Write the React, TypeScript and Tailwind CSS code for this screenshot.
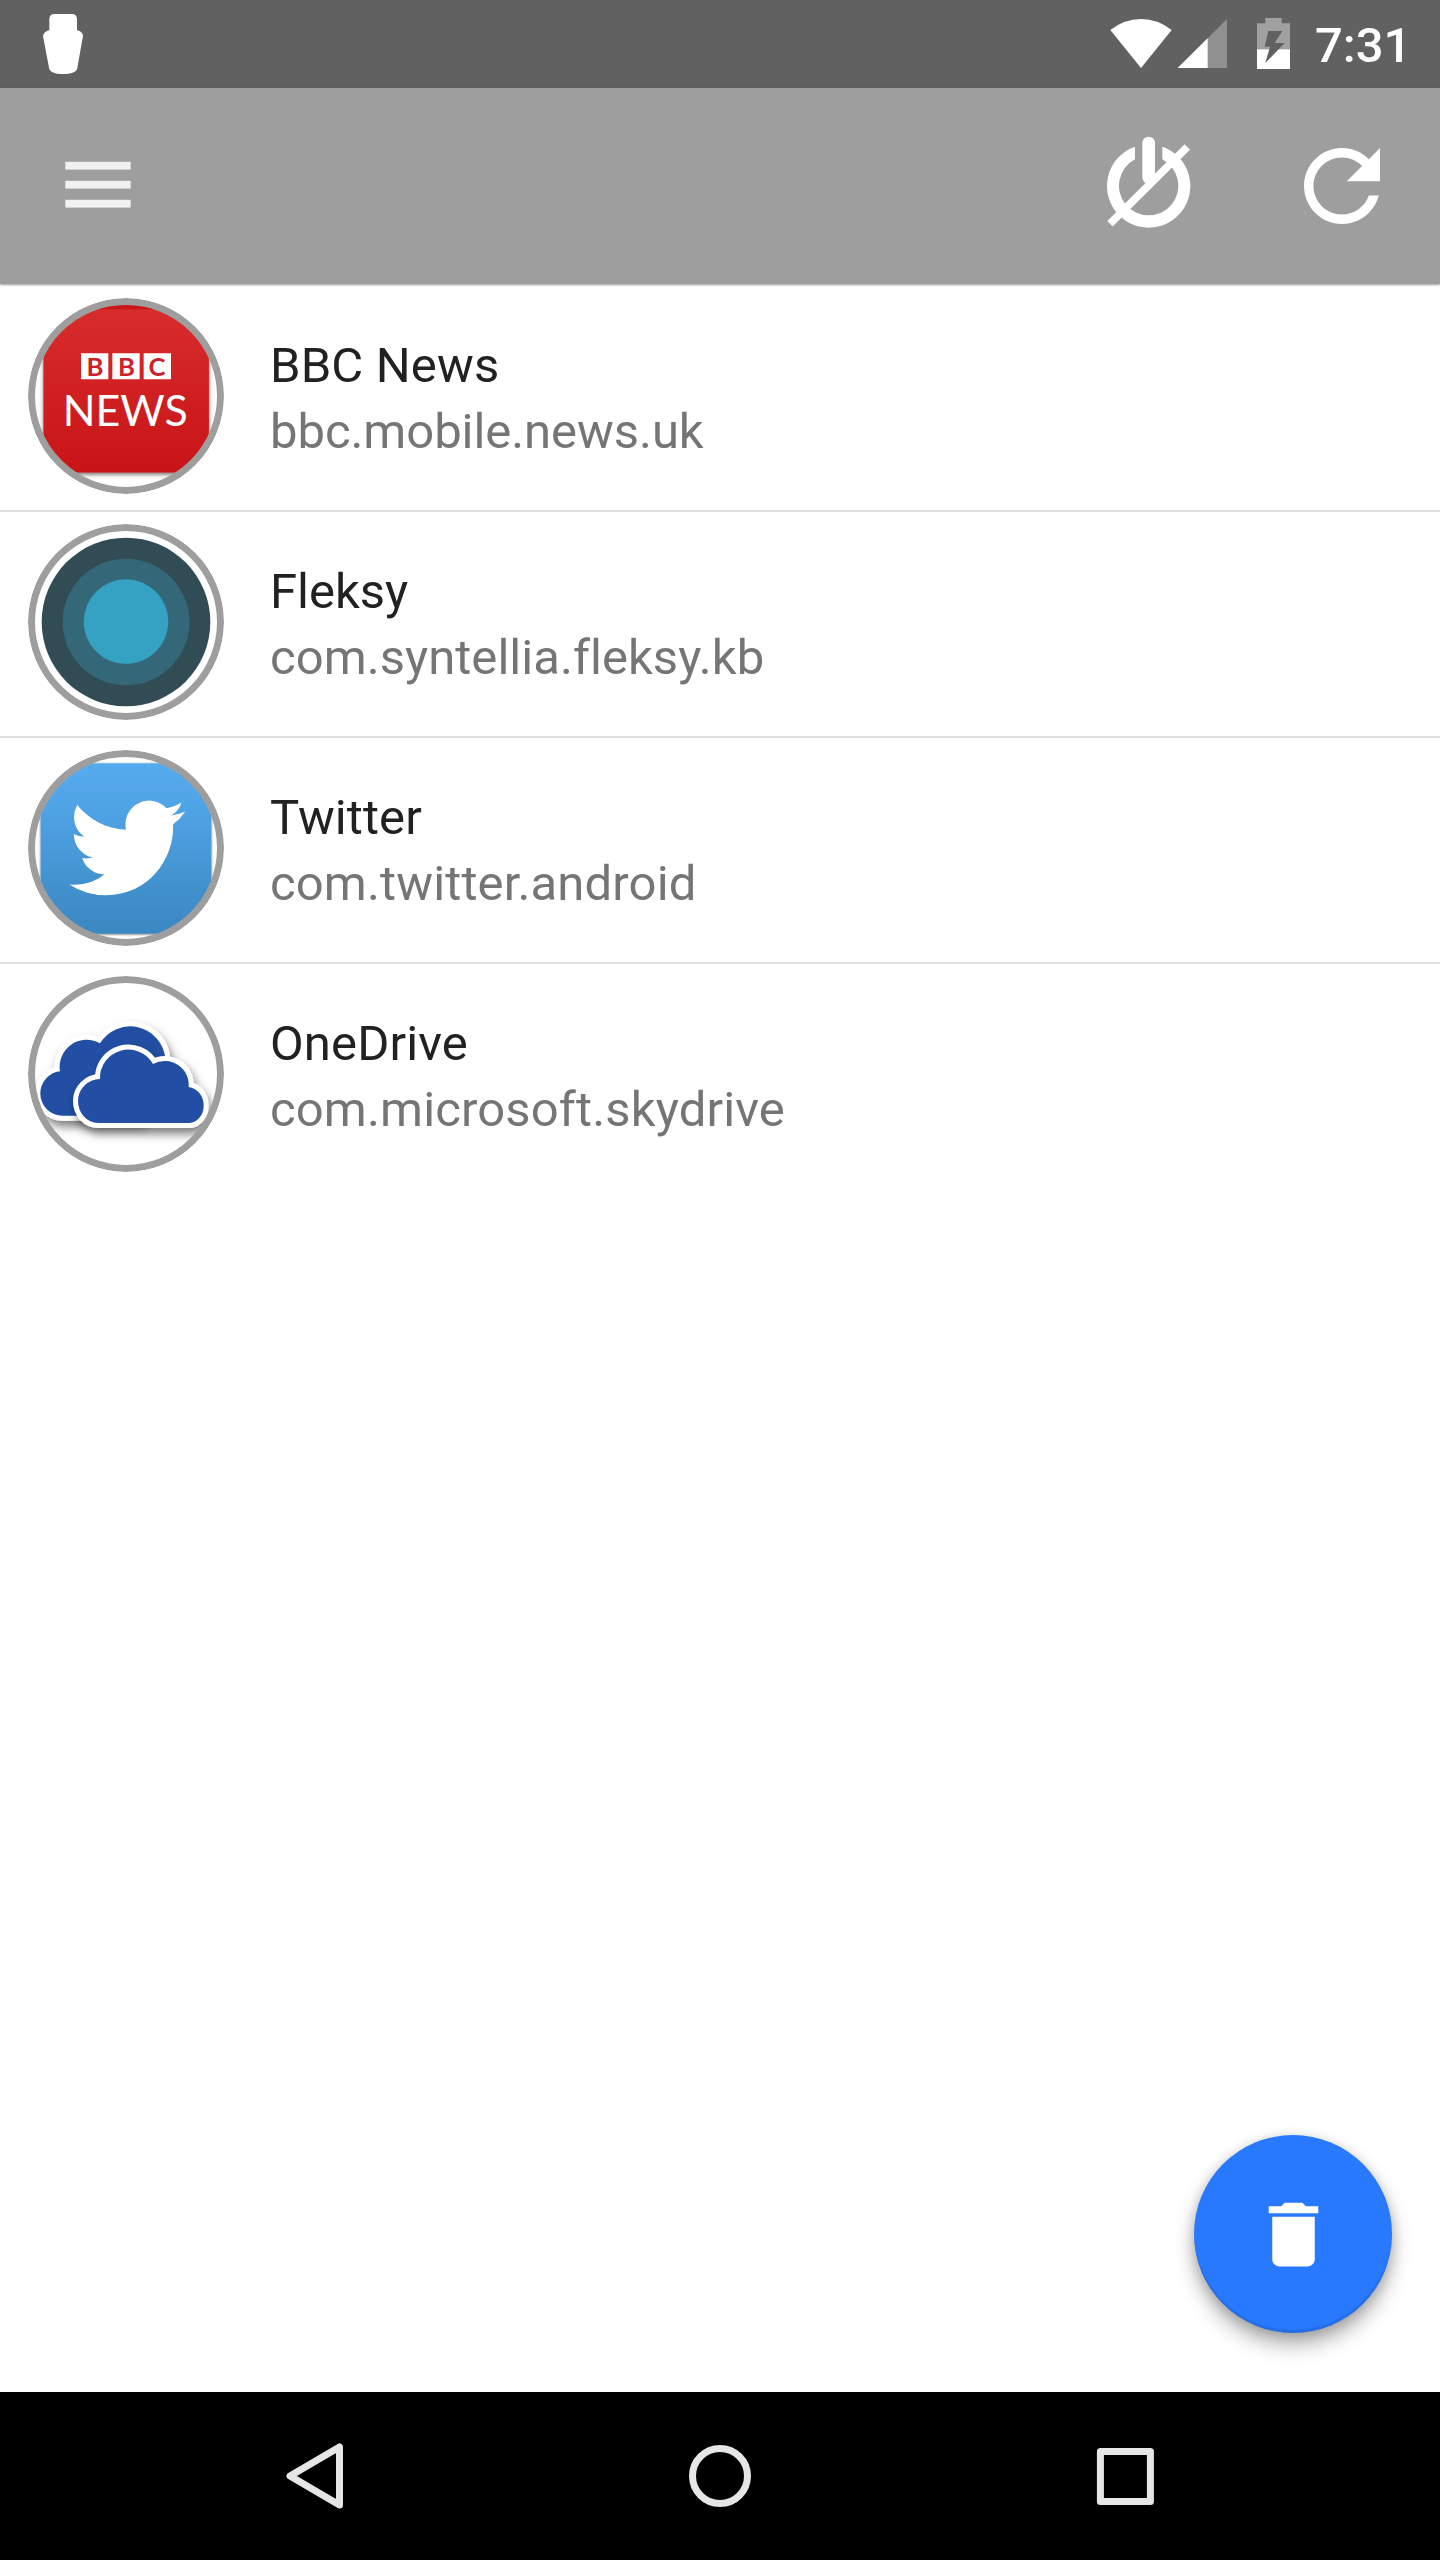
import type { ReactNode } from "react";

function StatusBar() {
  return (
    <header className="flex h-[88px] items-start bg-[#616161]">
      <svg className="ml-[43px] mt-[14px] h-[60px] w-[40px]" viewBox="129 42 120 180" fill="#fff">
        <path d="M148 58Q148 42 164 42H215Q231 42 231 58V90C241 93 249 99 249 108L232 203C232 216 212 222 189 222S148 216 147 203L129 108C130 99 138 93 148 90Z" />
      </svg>
      <svg className="ml-auto mt-[18px] h-[51px] w-[180px]" viewBox="90 54 540 153">
        <path d="M91 90Q133 57 183 57T275 90L183 204Z" fill="#fff" />
        <path d="M293 204L441 57V204Z" fill="#909090" />
        <path d="M293 204L383 115V204Z" fill="#fff" />
        <path d="M531 70H556V54H605V70H630V148H531Z" fill="#a0a0a0" />
        <path d="M531 148H630V207H531Z" fill="#fff" />
        <path d="M565 93H607L584 129H614L556 189L570 140H554Z" fill="#616161" />
      </svg>
      <span className="ml-[25px] mr-[32px] mt-[17px] w-[93px] whitespace-nowrap font-['Roboto',sans-serif] text-[49px] font-medium leading-[58px] text-white">
        7:31
      </span>
    </header>
  );
}

function AppBar() {
  return (
    <div className="relative z-10 flex h-[196px] items-start bg-[#9e9e9e] shadow-[0_1px_2px_rgba(0,0,0,0.4)]">
      <svg className="ml-[65px] mt-[73px] h-[48px] w-[66px]" viewBox="0 0 66 48" fill="#f1f1f1">
        <rect x=".3" y=".8" width="65.4" height="7.8" />
        <rect x=".3" y="19.8" width="65.4" height="7.8" />
        <rect x=".3" y="38.8" width="65.4" height="7.8" />
      </svg>
      <svg className="ml-auto mt-[46px] h-[96px] w-[90px]" viewBox="72 402 270 288">
        <path d="M165 440V478A89 89 0 1 0 247 478V440A125 125 0 1 1 165 440Z" fill="#fff" />
        <path d="M187 429a19 19 0 0 1 38 0V525L200 550Q187 546 187 532Z" fill="#fff" />
        <path d="M90 671L322 441" stroke="#fff" strokeWidth="23" />
      </svg>
      <svg className="ml-[91px] mr-[41px] mt-[41px] size-[114px]" viewBox="0 0 24 24" fill="#fff">
        <path d="M17.65 6.35C16.2 4.9 14.21 4 12 4c-4.42 0-7.99 3.58-7.99 8s3.57 8 7.99 8c3.73 0 6.84-2.55 7.73-6h-2.08c-.82 2.33-3.04 4-5.65 4-3.31 0-6-2.69-6-6s2.69-6 6-6c1.66 0 3.14.69 4.22 1.78L13 11h7V4l-2.35 2.35z" />
      </svg>
    </div>
  );
}

function BbcIcon() {
  return (
    <g>
      <defs>
        <linearGradient id="bbc" x1="0" y1="0" x2="0" y2="1">
          <stop offset="0" stopColor="#d82c2c" />
          <stop offset="1" stopColor="#c91417" />
        </linearGradient>
        <filter id="bbcShadow" x="-10%" y="-10%" width="120%" height="120%">
          <feDropShadow dx="0" dy="6" stdDeviation="7" floodOpacity=".6" />
        </filter>
      </defs>
      <rect x="47" y="-14" width="495" height="537" fill="#c91417" filter="url(#bbcShadow)" />
      <rect x="47" y="34" width="495" height="489" fill="url(#bbc)" />
      <path d="M159 166h82v78h-82zM253 166h82v78h-82zM347 166h82v78h-82z" fill="#fff" />
      <g fontFamily="Lato, sans-serif">
        <g fontSize="77" fontWeight="700" fill="#cf2025" textAnchor="middle">
          <text x="201" y="233">B</text>
          <text x="295" y="233">B</text>
          <text x="387" y="233">C</text>
        </g>
        <text x="104" y="383" fontSize="128" fontWeight="400" fill="#fff" textLength="375" lengthAdjust="spacingAndGlyphs">
          NEWS
        </text>
      </g>
    </g>
  );
}

function FleksyIcon() {
  return (
    <g>
      <circle cx="294" cy="294" r="253" fill="#324c55" />
      <circle cx="294" cy="294" r="190" fill="#346879" />
      <circle cx="294" cy="293" r="127" fill="#35a1c3" />
    </g>
  );
}

function TwitterIcon() {
  return (
    <g>
      <defs>
        <linearGradient id="tw" x1="0" y1="0" x2="0" y2="1">
          <stop offset="0" stopColor="#55abee" />
          <stop offset=".25" stopColor="#50a4e6" />
          <stop offset=".75" stopColor="#4190cc" />
          <stop offset="1" stopColor="#3b88c3" />
        </linearGradient>
        <filter id="twShadow" x="-10%" y="-10%" width="120%" height="120%">
          <feDropShadow dx="0" dy="2" stdDeviation="3" floodOpacity=".6" />
        </filter>
      </defs>
      <rect x="38" y="40" width="512" height="511" fill="url(#tw)" filter="url(#twShadow)" />
      <path
        transform="translate(124 119) scale(14.45 14.55)"
        fill="#fff"
        d="M23.953 4.57a10 10 0 01-2.825.775 4.958 4.958 0 002.163-2.723c-.951.555-2.005.959-3.127 1.184a4.92 4.92 0 00-8.384 4.482C7.69 8.095 4.067 6.13 1.64 3.162a4.822 4.822 0 00-.666 2.475c0 1.71.87 3.213 2.188 4.096a4.904 4.904 0 01-2.228-.616v.06a4.923 4.923 0 003.946 4.827 4.996 4.996 0 01-2.212.085 4.936 4.936 0 004.604 3.417 9.867 9.867 0 01-6.102 2.105c-.39 0-.779-.023-1.17-.067a13.995 13.995 0 007.557 2.209c9.053 0 13.998-7.496 13.998-13.985 0-.21 0-.42-.015-.63A9.935 9.935 0 0024 4.59z"
      />
    </g>
  );
}

function OneDriveIcon() {
  return (
    <g transform="translate(-84 -48)" fill="#2350a3" stroke="#fff" strokeWidth="30" strokeLinejoin="round" style={{ paintOrder: "stroke" }}>
      <defs>
        <filter id="cloudShadow" x="-20%" y="-20%" width="140%" height="150%">
          <feDropShadow dx="8" dy="18" stdDeviation="14" floodOpacity=".5" />
        </filter>
      </defs>
      <path filter="url(#cloudShadow)" d="M187 467A66 66 0 0 1 121 401A67 67 0 0 1 180 334A81 81 0 0 1 300 250A106 106 0 0 1 496 295L420 467Z" />
      <path filter="url(#cloudShadow)" d="M294 489A60 66 0 0 1 234 423A66 66 0 0 1 300 357A85 85 0 0 1 459 312A72 72 0 0 1 566 381A50 56 0 0 1 611 437A46 52 0 0 1 570 489Z" />
    </g>
  );
}

type AppInfo = {
  name: string;
  pkg: string;
  icon: ReactNode;
  nameTracking: string;
  pkgTracking: string;
};

const apps: AppInfo[] = [
  {
    name: "BBC News",
    pkg: "bbc.mobile.news.uk",
    icon: <BbcIcon />,
    nameTracking: "tracking-[0.15px]",
    pkgTracking: "tracking-[-0.06px]",
  },
  {
    name: "Fleksy",
    pkg: "com.syntellia.fleksy.kb",
    icon: <FleksyIcon />,
    nameTracking: "tracking-normal",
    pkgTracking: "tracking-[0.04px]",
  },
  {
    name: "Twitter",
    pkg: "com.twitter.android",
    icon: <TwitterIcon />,
    nameTracking: "tracking-[0.08px]",
    pkgTracking: "tracking-[0.14px]",
  },
  {
    name: "OneDrive",
    pkg: "com.microsoft.skydrive",
    icon: <OneDriveIcon />,
    nameTracking: "tracking-[0.14px]",
    pkgTracking: "tracking-[0.14px]",
  },
];

function AppRow({ name, pkg, icon, nameTracking, pkgTracking }: AppInfo) {
  return (
    <li className="flex h-[226px] items-start border-b-2 border-[#e0e0e0] pl-7 pt-3 last:border-transparent">
      <svg className="size-[196px] shrink-0 rounded-full bg-white" viewBox="0 0 588 588">
        <clipPath id={pkg}>
          <circle cx="294" cy="294" r="280" />
        </clipPath>
        <g clipPath={`url(#${pkg})`}>{icon}</g>
        <circle cx="294" cy="294" r="283.500" fill="none" stroke="#9e9e9e" strokeWidth="21" />
      </svg>
      <div className="ml-[46px] mt-[35px] text-[49px] leading-[66px] [font-variant-ligatures:none]">
        <p className={`text-[#212121] ${nameTracking}`}>{name}</p>
        <p className={`text-[#757575] ${pkgTracking}`}>{pkg}</p>
      </div>
    </li>
  );
}

function NavBar() {
  return (
    <nav className="flex h-[168px] items-center bg-black pl-[285px]">
      <svg className="h-[70px] w-[60px]" viewBox="0 0 60 70" fill="none" stroke="#e6e6e6" strokeWidth="7" strokeLinejoin="round">
        <path d="M54.500 6V64L5 35Z" />
      </svg>
      <svg className="ml-[343px] size-[64px]" viewBox="0 0 64 64" fill="none" stroke="#e6e6e6" strokeWidth="7">
        <circle cx="32" cy="32" r="27.500" />
      </svg>
      <svg className="ml-[343px] size-[60px]" viewBox="0 0 60 60" fill="none" stroke="#e6e6e6" strokeWidth="7" strokeLinejoin="round">
        <rect x="5.400" y="5.400" width="50" height="50" />
      </svg>
    </nav>
  );
}

export default function App() {
  return (
    <div className="relative flex h-[2560px] w-[1440px] flex-col overflow-hidden bg-white font-['Roboto',sans-serif]">
      <StatusBar />
      <AppBar />
      <main className="flex-1 pt-[2px]">
        <ul>
          {apps.map((app) => (
            <AppRow key={app.pkg} {...app} />
          ))}
        </ul>
      </main>
      <button
        aria-label="Delete"
        className="absolute bottom-[227px] right-[48px] flex size-[198px] items-center justify-center rounded-full bg-[#2979ff] shadow-[0_12px_20px_rgba(0,0,0,0.3),0_2px_12px_rgba(0,0,0,0.16),inset_0_-3px_1px_rgba(0,0,0,0.1)]"
      >
        <svg className="size-[85px]" viewBox="0 0 24 24" fill="#fff">
          <path d="M6 19c0 1.100.9 2 2 2h8c1.100 0 2-.9 2-2V7H6v12zM19 4h-3.500l-1-1h-5l-1 1H5v2h14V4z" />
        </svg>
      </button>
      <NavBar />
    </div>
  );
}
